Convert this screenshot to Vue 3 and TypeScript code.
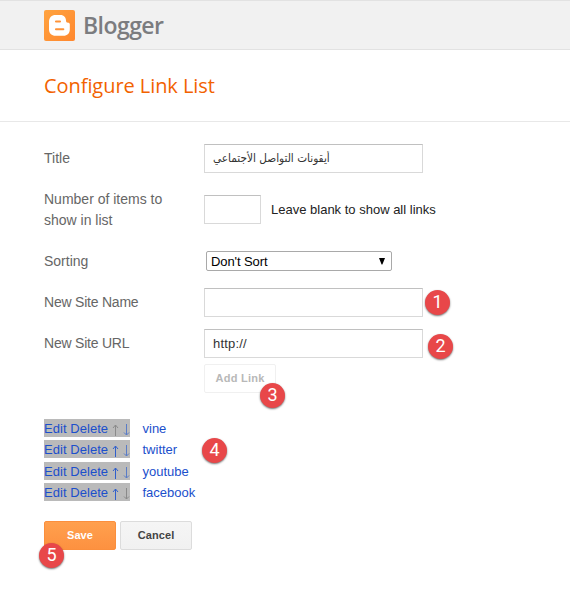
<script setup lang="ts">
import { ref } from 'vue'

interface LinkItem {
  name: string
  first: boolean
  last: boolean
}

const title = ref('أيقونات التواصل الأجتماعي')
const count = ref('')
const siteName = ref('')
const siteUrl = ref('http://')
const names: string[] = ['vine', 'twitter', 'youtube', 'facebook']
const links: LinkItem[] = names.map((name, i) => ({
  name,
  first: i === 0,
  last: i === names.length - 1,
}))
</script>

<template>
  <div class="page">
    <header class="topbar">
      <svg class="logo" width="31" height="31" viewBox="0 0 31 31">
        <defs>
          <linearGradient id="logoFill" x1="0" y1="0" x2="1" y2="1">
            <stop offset="0" stop-color="#ffa33f" />
            <stop offset="1" stop-color="#ff872e" />
          </linearGradient>
        </defs>
        <rect width="31" height="31" rx="2" fill="url(#logoFill)" />
        <path
          d="M11.500 5H16.500C20 5 22 7.500 22 10.500C22 12 22.700 12.700 24 12.700C25.200 12.700 25.800 13.300 25.800 14.300V19.500C25.800 23.300 23.300 25.800 19.500 25.800H11.500C7.700 25.800 5 23.300 5 19.500V11.500C5 7.700 7.700 5 11.500 5Z"
          fill="#fff"
        />
        <path d="M12 11.500H16M12 19.200H19.300" stroke="#ff9338" stroke-width="2.100" stroke-linecap="round" />
      </svg>
      <span class="brand">Blogger</span>
    </header>

    <div class="heading"><h1>Configure Link List</h1></div>

    <form class="form" @submit.prevent>
      <div class="row">
        <label>Title</label>
        <input v-model="title" class="wide arabic" type="text" />
      </div>
      <div class="row row-count">
        <label>Number of items to<br />show in list</label>
        <input v-model="count" class="small" type="text" />
        <span class="hint">Leave blank to show all links</span>
      </div>
      <div class="row row-sort">
        <label>Sorting</label>
        <div class="select">
          <span>Don't Sort</span>
          <svg width="6" height="7" viewBox="0 0 6 7"><path d="M0 0H6L3.400 6.500H2.600Z" fill="#000" /></svg>
        </div>
      </div>
      <div class="row row-name">
        <label>New Site Name</label>
        <input v-model="siteName" class="wide" type="text" />
        <span class="badge b1">1</span>
      </div>
      <div class="row row-url">
        <label>New Site URL</label>
        <input v-model="siteUrl" class="wide" type="text" />
        <span class="badge b2">2</span>
      </div>
      <div class="row row-add">
        <button class="btn add" type="button">Add Link</button>
        <span class="badge b3">3</span>
      </div>

      <div class="links">
        <div v-for="link in links" :key="link.name" class="link">
          <span class="actions">
            <a class="acts">Edit Delete</a>
            <svg class="arrow up" :class="{ off: link.first }" width="7" height="12" viewBox="0 0 7 12">
              <path d="M3.500 12V1M1 4L3.500 1L6 4" />
            </svg>
            <svg class="arrow down" :class="{ off: link.last }" width="7" height="12" viewBox="0 0 7 12">
              <path d="M3.500 0V11M1 8.500L3.500 11L6 8.500" />
            </svg>
          </span>
          <a class="name">{{ link.name }}</a>
        </div>
        <span class="badge b4">4</span>
      </div>

      <div class="buttons">
        <button class="btn save" type="button">Save</button>
        <button class="btn cancel" type="button">Cancel</button>
        <span class="badge b5">5</span>
      </div>
    </form>
  </div>
</template>

<style>
body {
  background: #fff;
}
</style>

<style scoped>
.page {
  width: 570px;
  height: 600px;
  overflow: hidden;
  font: 13px 'Liberation Sans', Arial, sans-serif;
  color: #222;
}
.page * {
  box-sizing: border-box;
}
.topbar {
  height: 50px;
  display: flex;
  align-items: flex-start;
  padding: 9px 0 0 44px;
  gap: 8px;
  background: #f1f1f1;
  border-top: 1px solid #e2e2e2;
  border-bottom: 1px solid #e2e2e2;
}
.logo {
  display: block;
}
.brand {
  font: 600 23px/30px 'Open Sans', sans-serif;
  letter-spacing: -0.55px;
  color: #7b7c7f;
}
.heading {
  height: 72px;
  padding: 22px 44px 0;
  border-bottom: 1px solid #e8e8e8;
}
h1 {
  margin: 0;
  font: 400 20px/28px 'Open Sans', sans-serif;
  letter-spacing: -0.06px;
  color: #f26200;
  white-space: nowrap;
}
.form {
  padding: 22px 0 0 44px;
}
.row {
  display: flex;
  align-items: center;
  height: 29px;
  position: relative;
}
.row-count {
  height: 42px;
  margin-top: 15px;
}
.row-count label {
  padding-top: 2px;
}
.row-sort {
  height: 20px;
  margin-top: 21px;
}
.row-name {
  margin-top: 17px;
}
.row-url {
  margin-top: 12px;
}
.row-name label,
.row-url label {
  letter-spacing: -0.22px;
}
.row-add {
  margin-top: 6px;
  padding-left: 160px;
}
label {
  width: 160px;
  flex: none;
  font-size: 14px;
  line-height: 21px;
  color: #666;
}
input {
  height: 29px;
  padding: 0 8px;
  border: 1px solid #d9d9d9;
  border-top-color: #c0c0c0;
  background: #fff;
  font: 13px 'Liberation Sans', Arial, sans-serif;
  letter-spacing: 0.2px;
  color: #333;
  outline: none;
}
.wide {
  width: 219px;
}
.small {
  width: 57px;
}
.arabic {
  padding-bottom: 2px;
  font: 11.7px 'DejaVu Sans Condensed', 'DejaVu Sans', sans-serif;
  font-stretch: condensed;
  letter-spacing: 0;
}
.hint {
  margin-left: 10px;
}
.select {
  display: flex;
  align-items: center;
  justify-content: space-between;
  width: 186px;
  height: 20px;
  margin-left: 2px;
  padding: 0 6px 0 4px;
  border: 1px solid #a9a9a9;
  border-radius: 2px;
  color: #000;
  letter-spacing: -0.1px;
}
.btn {
  width: 72px;
  height: 29px;
  padding: 0 0 2px;
  border-radius: 2px;
  font: bold 11px 'Liberation Sans', Arial, sans-serif;
  letter-spacing: 0.1px;
  text-align: center;
}
.add {
  border: 1px solid #f0f0f0;
  background: #fff;
  color: #b8b8b8;
  letter-spacing: 0.25px;
}
.links {
  position: relative;
  display: grid;
  grid-template-rows: 21px 22px 21px 18px;
  margin-top: 26px;
}
.link {
  display: flex;
  height: 18px;
  line-height: 20px;
  color: #1b4fcc;
}
.actions {
  display: flex;
  align-items: flex-start;
  width: 86px;
  margin-right: 12.500px;
  background: #bababa;
}
.acts {
  width: 68px;
  white-space: nowrap;
  letter-spacing: 0.05px;
}
.arrow {
  flex: none;
  margin-top: 5px;
  fill: none;
  stroke: #2f5fcc;
  stroke-width: 1;
}
.down {
  margin-left: 4px;
  stroke: #5a7cc6;
}
.arrow.off {
  stroke: #8a8a8a;
}
.buttons {
  position: relative;
  display: flex;
  gap: 4px;
  margin-top: 20px;
}
.save {
  border: 1px solid #fb8f3d;
  background: linear-gradient(#ffa04e, #fd9140);
  color: #fff;
}
.cancel {
  border: 1px solid #dcdcdc;
  background: linear-gradient(#f5f5f5, #f1f1f1);
  color: #444;
}
.badge {
  position: absolute;
  width: 25px;
  height: 25px;
  border-radius: 50%;
  background: #e84749;
  box-shadow: 0 1px 2px rgba(0, 0, 0, 0.55);
  color: #fff;
  font: 18px/24px Roboto, sans-serif;
  text-align: center;
}
.b1 {
  left: 381px;
  top: 2px;
}
.b2 {
  left: 384px;
  top: 5px;
}
.b3 {
  left: 216px;
  top: 19px;
}
.b4 {
  left: 158px;
  top: 19px;
}
.b5 {
  left: -5px;
  top: 22px;
}
</style>
